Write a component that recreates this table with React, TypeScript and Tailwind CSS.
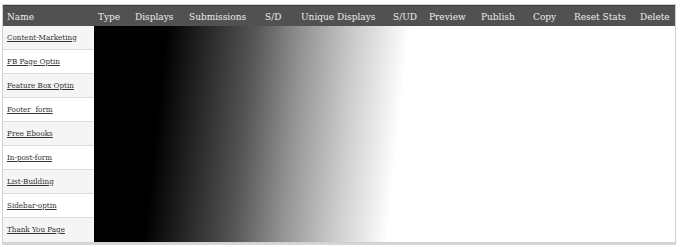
import React from "react";

const cols: { label: string; w: string }[] = [
  { label: "Name", w: "w-[91px]" },
  { label: "Type", w: "w-[37px]" },
  { label: "Displays", w: "w-[54px]" },
  { label: "Submissions", w: "w-[76px]" },
  { label: "S/D", w: "w-[36px]" },
  { label: "Unique Displays", w: "w-[92px]" },
  { label: "S/UD", w: "w-[36px]" },
  { label: "Preview", w: "w-[52px]" },
  { label: "Publish", w: "w-[52px]" },
  { label: "Copy", w: "w-[41px]" },
  { label: "Reset Stats", w: "w-[66px]" },
  { label: "Delete", w: "w-[40px]" },
];

const rows = [
  "Content-Marketing",
  "FB Page Optin",
  "Feature Box Optin",
  "Footer  form",
  "Free Ebooks",
  "In-post-form",
  "List-Building",
  "Sidebar-optin",
  "Thank You Page",
];

export default function App() {
  return (
    <div className="w-[680px] h-[247px] bg-white pt-[4px] pl-[2px] font-['DejaVu_Serif_Condensed','DejaVu_Serif',serif]">
      <div className="w-[674px] border border-[#cfcfcf] shadow-[0_2px_0_#d6d6d6]">
        <div className="flex h-[21px] items-center bg-[#515151] text-[#ededed] text-[10px] border-t border-[#3e3e3e]">
          {cols.map((c) => (
            <div key={c.label} className={`${c.w} shrink-0 pl-[4px] whitespace-nowrap`}>
              {c.label}
            </div>
          ))}
        </div>
        <div className="flex">
          <div className="w-[91px] shrink-0 flex flex-col">
            {rows.map((r, i) => (
              <div
                key={r}
                className={`h-[24px] flex items-center pl-[4px] text-[8px] text-[#333] underline whitespace-pre border-b border-[#dcdcdc] last:border-b-0 ${
                  i % 2 === 0 ? "bg-[#f5f5f5]" : "bg-white"
                }`}
              >
                {r}
              </div>
            ))}
          </div>
          <div className="flex-1 bg-[linear-gradient(96deg,#000_0px,#000_72px,#262626_112px,#555_160px,#959595_210px,#cdcdcd_262px,#f3f3f3_302px,#fff_314px)]" />
        </div>
      </div>
    </div>
  );
}
